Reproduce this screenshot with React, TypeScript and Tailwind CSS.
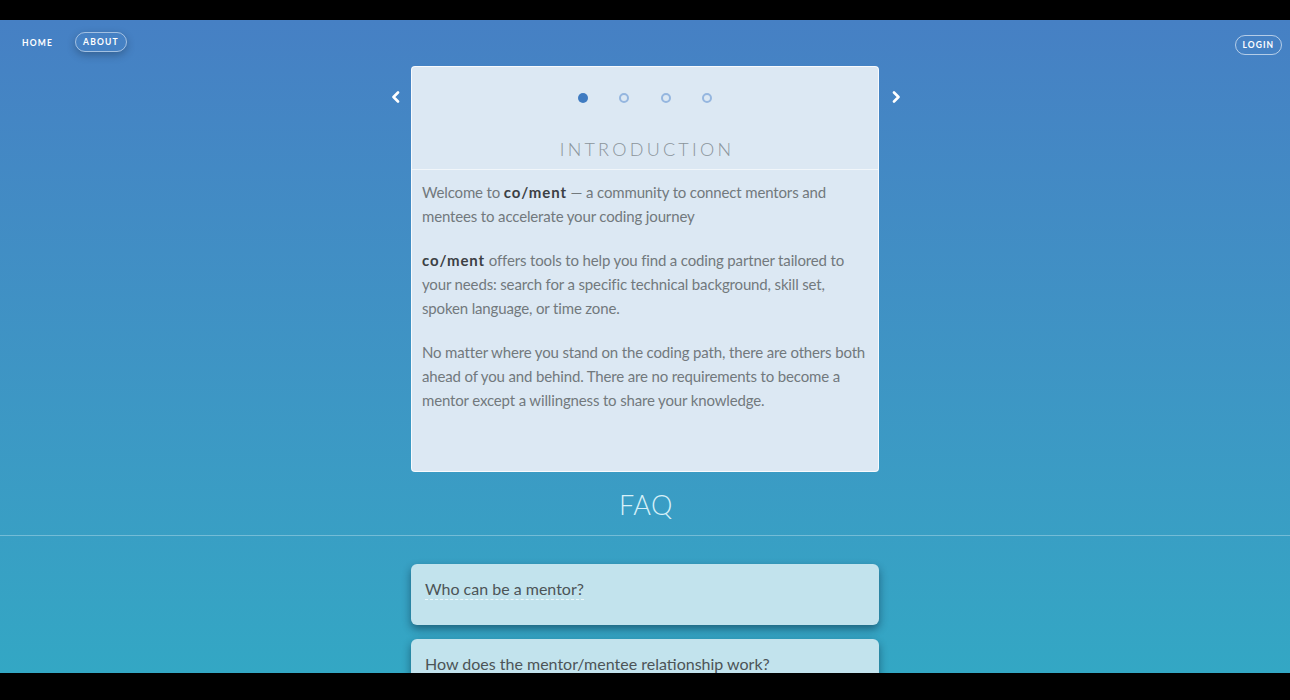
import React from "react";

const font = { fontFamily: "Lato, 'Open Sans', sans-serif" };

function Chevron({ dir }: { dir: "left" | "right" }) {
  return (
    <svg width="10" height="12" viewBox="0 0 10 12" className="block">
      {dir === "left" ? (
        <polyline points="7,1.5 2.5,6 7,10.5" fill="none" stroke="white" strokeWidth="2.6" strokeLinecap="round" strokeLinejoin="round" />
      ) : (
        <polyline points="3,1.5 7.5,6 3,10.5" fill="none" stroke="white" strokeWidth="2.6" strokeLinecap="round" strokeLinejoin="round" />
      )}
    </svg>
  );
}

function B({ children }: { children: React.ReactNode }) {
  return <b className="font-bold text-[#3b4044] tracking-[0.06em]">{children}</b>;
}

export default function App() {
  return (
    <div className="w-[1290px] h-[700px] bg-black flex flex-col overflow-hidden" style={font}>
      <div className="h-[20px] bg-black shrink-0" />
      <div className="h-[653px] shrink-0 bg-gradient-to-b from-[#4680c4] to-[#33a7c4] overflow-hidden flex flex-col items-center relative">
        {/* nav */}
        <div className="w-full h-[46px] flex justify-between items-start px-[6px] shrink-0">
          <div className="flex items-start gap-[6px]">
            <span className="text-[8.5px] font-bold tracking-[0.14em] text-white px-[16px] mt-[17px]">HOME</span>
            <span className="text-[8.5px] font-bold tracking-[0.14em] text-white px-[7px] h-[20px] mt-[12px] rounded-full border border-white/50 flex items-center shadow-[0_3px_8px_rgba(0,0,0,0.25)]">ABOUT</span>
          </div>
          <span className="text-[8.5px] font-bold tracking-[0.12em] text-white px-[7px] h-[20px] mt-[15px] mr-[2px] rounded-full border border-white/60 flex items-center">LOGIN</span>
        </div>
        {/* carousel */}
        <div className="flex items-start">
          <div className="w-[34px] h-[62px] flex items-center justify-center pl-[3px]">
            <Chevron dir="left" />
          </div>
          <div className="w-[468px] h-[406px] bg-[#dce8f3] rounded-[4px] border border-white/80 flex flex-col">
            <div className="h-[62px] flex items-center justify-center gap-[31.5px]">
              <span className="w-[10px] h-[10px] rounded-full bg-[#3f7bc1]" />
              <span className="w-[10px] h-[10px] rounded-full border-2 border-[#95b6df]" />
              <span className="w-[10px] h-[10px] rounded-full border-2 border-[#95b6df]" />
              <span className="w-[10px] h-[10px] rounded-full border-2 border-[#95b6df]" />
            </div>
            <div className="h-[41px] flex items-start justify-center border-b border-white/60">
              <span className="text-[18px] font-light tracking-[0.18em] text-[#8b949b] pl-[4px] leading-none pt-[11px]">INTRODUCTION</span>
            </div>
            <div className="px-[10px] pt-[10px] text-[15px] leading-[24px] text-[#72797d] tracking-[-0.01em]">
              <p className="mb-[20px]">
                Welcome to <B>co/ment</B> — a community to connect mentors and<br />
                mentees to accelerate your coding journey
              </p>
              <p className="mb-[20px]">
                <B>co/ment</B> offers tools to help you find a coding partner tailored to<br />
                your needs: search for a specific technical background, skill set,<br />
                spoken language, or time zone.
              </p>
              <p>
                No matter where you stand on the coding path, there are others both<br />
                ahead of you and behind. There are no requirements to become a<br />
                mentor except a willingness to share your knowledge.
              </p>
            </div>
          </div>
          <div className="w-[34px] h-[62px] flex items-center justify-center">
            <Chevron dir="right" />
          </div>
        </div>
        {/* FAQ */}
        <div className="h-[64px] w-full flex items-center justify-center border-b border-white/30 shrink-0">
          <span className="text-[27px] font-light text-[#d6f0f8] tracking-[0.02em] pt-[4px] pl-[2px]">FAQ</span>
        </div>
        <div className="flex flex-col gap-[14px] mt-[28px] w-[468px]">
          <div className="h-[61px] rounded-[6px] bg-[#c2e3ed] shadow-[0_4px_8px_rgba(0,20,40,0.45)] px-[14px] pt-[13px]">
            <span className="text-[16px] text-[#4c5457] border-b border-dashed border-white/70 pb-[1px] leading-[24px]">Who can be a mentor?</span>
          </div>
          <div className="h-[61px] rounded-[6px] bg-[#c2e3ed] shadow-[0_4px_8px_rgba(0,20,40,0.45)] px-[14px] pt-[13px]">
            <span className="text-[16px] text-[#4c5457] leading-[24px]">How does the mentor/mentee relationship work?</span>
          </div>
        </div>
      </div>
      <div className="h-[27px] bg-black shrink-0" />
    </div>
  );
}
